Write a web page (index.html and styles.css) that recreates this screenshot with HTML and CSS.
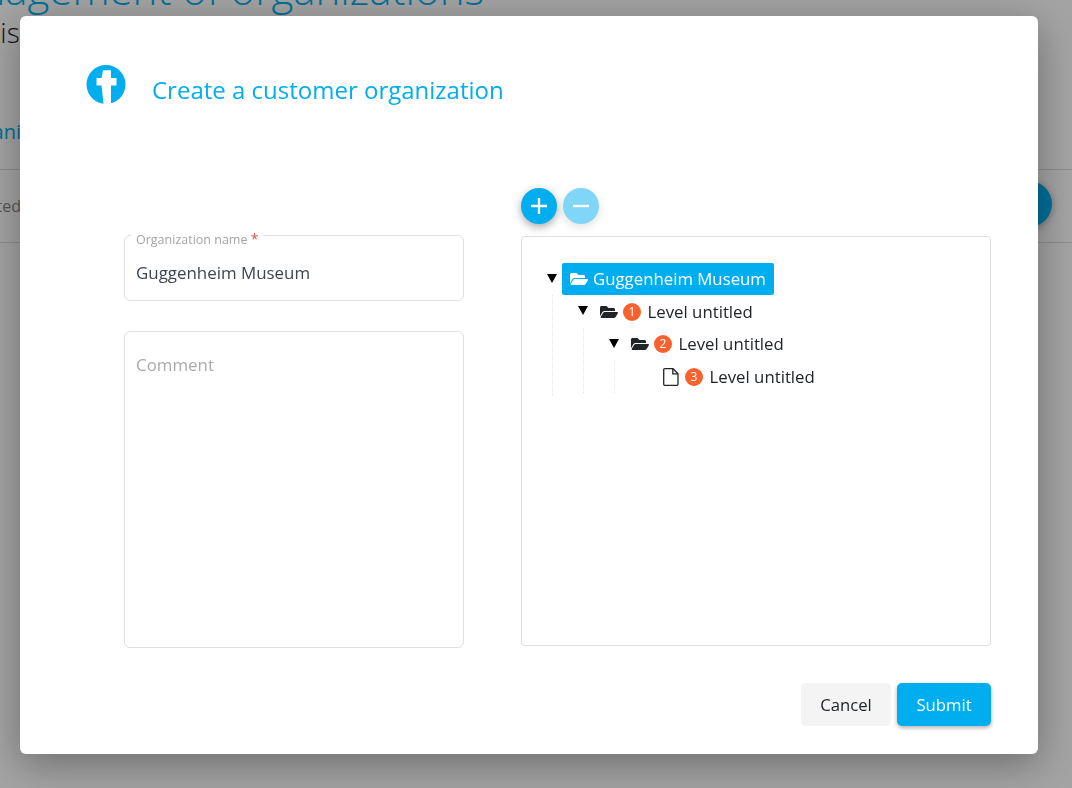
FILE: index.html
```html
<!DOCTYPE html>
<html lang="en">
<head>
<meta charset="utf-8">
<title>Create a customer organization</title>
<link rel="stylesheet" href="styles.css">
</head>
<body>
<main class="page">
  <h1 class="page-title">Management of organizations</h1>
  <p class="page-sub">List of organizations</p>
  <div class="page-tab">Organizations</div>
  <div class="page-filter"><span>Created</span><i class="page-fab"></i></div>
</main>
<div class="backdrop">
  <section class="modal">
    <header class="modal-head">
      <svg class="logo" viewBox="0 0 40 40" aria-hidden="true">
        <circle cx="20" cy="19.500" r="19.500" fill="#00aeef"/>
        <path d="M17 5.300h8V13h5.500v7.500H25V39h-7.500l-2-18.500h-5V13h5z" fill="#fff"/>
      </svg>
      <h2 class="modal-title">Create a customer organization</h2>
    </header>
    <div class="modal-body">
      <form class="form-col">
        <div class="field">
          <label class="field-label">Organization name <b>*</b></label>
          <div class="field-value">Guggenheim Museum</div>
        </div>
        <div class="comment">Comment</div>
      </form>
      <div class="tree-col">
        <div class="tree-actions">
          <button class="round" type="button"><svg viewBox="0 0 20 20"><path d="M10 2v16M2 10h16"/></svg></button>
          <button class="round round-off" type="button"><svg viewBox="0 0 20 20"><path d="M2 10h16"/></svg></button>
        </div>
        <div class="tree-box">
          <ul class="tree">
            <li>
              <div class="row">
                <i class="caret"></i>
                <span class="chip">
                  <svg class="ico-folder" viewBox="0 0 576 512"><path d="M572.694 292.093L500.27 416.248A63.997 63.997 0 0 1 444.989 448H45.025c-18.523 0-30.064-20.093-20.731-36.093l72.424-124.155A64 64 0 0 1 152 256h399.964c18.523 0 30.064 20.093 20.73 36.093zM152 224h328v-48c0-26.51-21.49-48-48-48H272l-64-64H48C21.49 64 0 85.49 0 112v278.046l69.077-118.418C86.214 242.25 117.989 224 152 224z"/></svg>
                  Guggenheim Museum
                </span>
              </div>
              <ul class="tree-sub">
                <li>
                  <div class="row">
                    <i class="caret"></i>
                    <svg class="ico-folder" viewBox="0 0 576 512"><path d="M572.694 292.093L500.27 416.248A63.997 63.997 0 0 1 444.989 448H45.025c-18.523 0-30.064-20.093-20.731-36.093l72.424-124.155A64 64 0 0 1 152 256h399.964c18.523 0 30.064 20.093 20.73 36.093zM152 224h328v-48c0-26.51-21.49-48-48-48H272l-64-64H48C21.49 64 0 85.49 0 112v278.046l69.077-118.418C86.214 242.25 117.989 224 152 224z"/></svg>
                    <span class="badge">1</span><span class="label">Level untitled</span>
                  </div>
                  <ul class="tree-sub">
                    <li>
                      <div class="row">
                        <i class="caret"></i>
                        <svg class="ico-folder" viewBox="0 0 576 512"><path d="M572.694 292.093L500.27 416.248A63.997 63.997 0 0 1 444.989 448H45.025c-18.523 0-30.064-20.093-20.731-36.093l72.424-124.155A64 64 0 0 1 152 256h399.964c18.523 0 30.064 20.093 20.73 36.093zM152 224h328v-48c0-26.51-21.49-48-48-48H272l-64-64H48C21.49 64 0 85.49 0 112v278.046l69.077-118.418C86.214 242.25 117.989 224 152 224z"/></svg>
                        <span class="badge">2</span><span class="label">Level untitled</span>
                      </div>
                      <ul class="tree-sub">
                        <li>
                          <div class="row row-leaf">
                            <svg class="ico-file" viewBox="0 0 16 18"><path d="M1.700.700h8.300l5 5v10.600a1 1 0 0 1-1 1H1.700a1 1 0 0 1-1-1V1.700a1 1 0 0 1 1-1z"/><path d="M9.800.700v5.200H15"/></svg>
                            <span class="badge">3</span><span class="label">Level untitled</span>
                          </div>
                        </li>
                      </ul>
                    </li>
                  </ul>
                </li>
              </ul>
            </li>
          </ul>
        </div>
      </div>
    </div>
    <footer class="modal-foot">
      <button class="btn btn-cancel" type="button">Cancel</button>
      <button class="btn btn-submit" type="button">Submit</button>
    </footer>
  </section>
</div>
</body>
</html>
```
FILE: styles.css
```css
* { box-sizing: border-box; }
html, body { margin: 0; height: 100%; overflow: hidden; }
body {
  font-family: "Open Sans", "Liberation Sans", sans-serif;
  background: #fff;
  color: #212529;
}
.page { height: 100%; }
.page-title {
  margin: -33px 0 0 -78px;
  font-size: 42px;
  line-height: 44px;
  font-weight: 300;
  color: #00aeef;
  white-space: nowrap;
}
.page-sub {
  margin: 0 0 0 -14px;
  font-size: 28px;
  line-height: 42px;
  font-weight: 300;
  white-space: nowrap;
}
.page-tab {
  margin: 65px 0 0 -42px;
  font-size: 20px;
  line-height: 28px;
  color: #00aeef;
  white-space: nowrap;
}
.page-filter {
  margin-top: 23px;
  height: 74px;
  border-top: 1px solid #ddd;
  border-bottom: 1px solid #ddd;
  display: flex;
  align-items: center;
  justify-content: space-between;
  padding-right: 20px;
  font-size: 16px;
  color: #888;
}
.page-filter span { margin-left: -38px; }
.page-fab {
  width: 46px;
  height: 46px;
  border-radius: 50%;
  background: #00aeef;
  box-shadow: 0 2px 8px rgba(0, 0, 0, .3);
  margin-top: -5px;
}
.backdrop {
  position: fixed;
  inset: 0;
  background: rgba(0, 0, 0, .36);
  padding: 16px 34px 0 20px;
}
.modal {
  height: 738px;
  background: #fff;
  border-radius: 6px;
  box-shadow: 0 10px 40px rgba(0, 0, 0, .34);
  padding: 49px 47px 28px 66px;
  display: flex;
  flex-direction: column;
}
.modal-head {
  display: flex;
  align-items: center;
  height: 40px;
}
.logo { width: 40px; height: 40px; flex: none; }
.modal-title {
  margin: 10px 0 0 26px;
  font-size: 24px;
  line-height: 32px;
  font-weight: 400;
  color: #00aeef;
}
.modal-body {
  margin: 83px 0 0 38px;
  display: flex;
  gap: 57px;
  align-items: flex-start;
}
.form-col {
  width: 340px;
  margin-top: 47px;
  display: flex;
  flex-direction: column;
  gap: 30px;
}
.field {
  position: relative;
  height: 66px;
  border: 1px solid #dfdfdf;
  border-radius: 6px;
  padding: 24px 11px 0;
  font-size: 16.900px;
  line-height: 26px;
  color: #3d4650;
}
.field-label {
  position: absolute;
  left: 6px;
  top: -5px;
  padding: 0 5px;
  background: #fff;
  font-size: 12.500px;
  line-height: 16px;
  color: #a5a5a5;
}
.field-label b { font-weight: 400; font-size: 14px; color: #d9534f; }
.comment {
  height: 317px;
  border: 1px solid #dfdfdf;
  border-radius: 6px;
  padding: 20px 11px;
  font-size: 16.900px;
  line-height: 26px;
  color: #aaa;
}
.tree-col { width: 470px; }
.tree-actions { display: flex; gap: 6px; height: 48px; }
.round {
  width: 36px;
  height: 36px;
  padding: 8px;
  border: 0;
  border-radius: 50%;
  background: #00aeef;
  box-shadow: 0 3px 8px rgba(0, 0, 0, .35);
}
.round svg {
  display: block;
  width: 20px;
  height: 20px;
  fill: none;
  stroke: #fff;
  stroke-width: 2.300;
}
.round-off { background: #7fd6f7; box-shadow: 0 3px 8px rgba(0, 0, 0, .12); }
.tree-box {
  height: 410px;
  border: 1px solid #dfdfdf;
  border-radius: 4px;
  padding: 26px 0 0 25px;
  font-size: 16.800px;
}
.tree, .tree-sub { list-style: none; margin: 0; padding: 0; }
.tree-sub {
  margin-left: 5px;
  padding-left: 25px;
  border-left: 1px dotted #e4e4e4;
}
.tree > li > .tree-sub { padding-bottom: 3px; }
.tree-sub li { padding-top: .67px; }
.row {
  display: flex;
  align-items: center;
  height: 32px;
  white-space: nowrap;
  line-height: 32px;
  color: #212529;
}
.row-leaf { margin-left: 23px; }
.caret {
  width: 0;
  height: 0;
  margin: -2px 5px 0 0;
  flex: none;
  border-left: 5px solid transparent;
  border-right: 5px solid transparent;
  border-top: 9px solid #000;
}
.chip {
  display: flex;
  align-items: center;
  height: 32px;
  padding: 0 8px;
  border-radius: 2px;
  background: #00aeef;
  color: #fff;
}
.ico-folder {
  width: 18px;
  height: 16px;
  margin: 0 5px 0 7px;
  flex: none;
  fill: #212529;
}
.chip .ico-folder { margin: 0 5px 0 0; fill: #fff; }
.ico-file {
  width: 16px;
  height: 18px;
  margin-right: 6px;
  flex: none;
  fill: none;
  stroke: #212529;
  stroke-width: 1.300;
}
.badge {
  width: 18px;
  height: 18px;
  margin-right: 6.500px;
  flex: none;
  border-radius: 50%;
  background: #f9622e;
  color: #fff;
  font-size: 12px;
  line-height: 18px;
  text-align: center;
}
.modal-foot {
  margin-top: auto;
  display: flex;
  justify-content: flex-end;
  gap: 6px;
}
.btn {
  height: 43px;
  border: 0;
  border-radius: 5px;
  font-family: inherit;
  font-size: 16.700px;
}
.btn-cancel { width: 90px; background: #f4f4f4; color: #212529; }
.btn-submit {
  width: 94px;
  background: #00aeef;
  color: #fff;
  box-shadow: 0 2px 4px rgba(0, 0, 0, .3);
}
```
